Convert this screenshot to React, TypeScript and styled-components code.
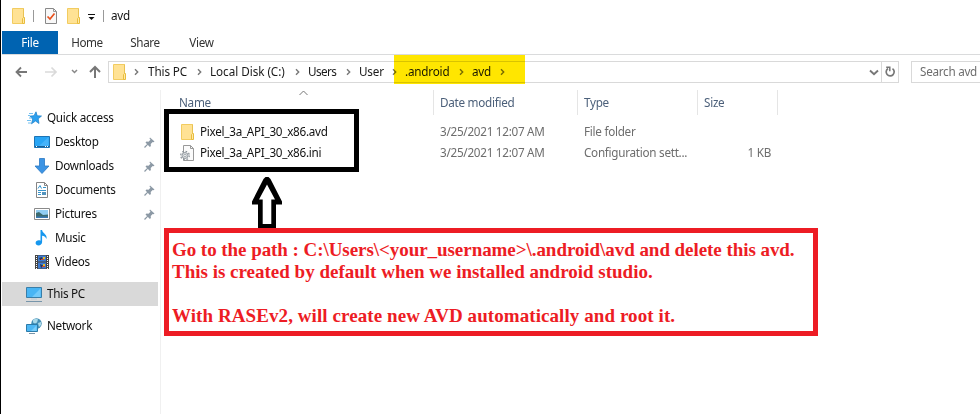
import React from 'react';
import styled, { createGlobalStyle } from 'styled-components';

const GlobalStyle = createGlobalStyle`
  * { box-sizing: border-box; }
  body { margin: 0; background: #fff; overflow: hidden; }
  svg { display: block; flex: none; }
`;

const Window = styled.div`
  position: relative;
  width: 980px;
  height: 414px;
  border-left: 1px solid #000;
  padding-left: 1px;
  overflow: hidden;
  background: #fff;
  color: #111;
  font: 11.7px/16px 'Noto Sans', 'Open Sans', sans-serif;
`;

const Text = styled.span<{ $ls?: number }>`
  display: block;
  padding-bottom: 2px;
  white-space: nowrap;
  letter-spacing: ${(p) => p.$ls ?? -0.27}px;
`;

const TitleBar = styled.header`
  display: flex;
  align-items: center;
  height: 31px;
  padding-left: 10px;
`;

const TitleRule = styled.i<{ $ml: number; $mr: number }>`
  width: 1px;
  height: 12px;
  margin: 0 ${(p) => p.$mr}px 0 ${(p) => p.$ml}px;
  background: #999;
`;

const TitleIcon = styled.span<{ $ml?: number; $mt?: number }>`
  margin-left: ${(p) => p.$ml ?? 0}px;
  margin-top: ${(p) => p.$mt ?? 0}px;
`;

const Ribbon = styled.nav`
  display: flex;
  height: 24px;
  border-bottom: 1px solid #dadbdc;
`;

const Tab = styled.div<{ $active?: boolean; $w: number }>`
  display: flex;
  align-items: center;
  justify-content: center;
  width: ${(p) => p.$w}px;
  height: 23px;
  padding-top: 1px;
  color: ${(p) => (p.$active ? '#fff' : '#333')};
  background: ${(p) => (p.$active ? '#0063b1' : 'transparent')};
`;

const AddressRow = styled.div`
  display: flex;
  height: 35px;
  padding-top: 6px;
`;

const NavButtons = styled.div`
  display: flex;
  width: 106px;
  height: 22px;
`;

const AddressBar = styled.div`
  display: flex;
  align-items: center;
  width: 791px;
  height: 22px;
  border: 1px solid #d9d9d9;
`;

const Crumb = styled.span<{ $w: number }>`
  display: flex;
  width: ${(p) => p.$w}px;
  color: #1a1a1a;
`;

const AddressTools = styled.div`
  display: flex;
  align-items: center;
  margin-left: auto;
  height: 20px;
`;

const Refresh = styled.div`
  display: flex;
  align-items: center;
  justify-content: center;
  width: 17px;
  height: 20px;
  margin-left: 2px;
  border-left: 1px solid #d9d9d9;
`;

const SearchBox = styled.div`
  display: flex;
  align-items: center;
  flex: 1;
  height: 22px;
  margin-left: 12px;
  padding-left: 8px;
  border: 1px solid #d9d9d9;
  border-right: 0;
  color: #6d6d6d;
`;

const Main = styled.div`
  display: flex;
  height: 324px;
`;

const Sidebar = styled.aside`
  width: 159px;
  padding-top: 16px;
  border-right: 1px solid #f0f0f0;
`;

const NavItem = styled.div<{ $indent: number; $gap?: number; $selected?: boolean }>`
  display: flex;
  align-items: center;
  width: 156px;
  height: 24px;
  margin-top: ${(p) => p.$gap ?? 0}px;
  padding: 0 3px 0 ${(p) => p.$indent}px;
  background: ${(p) => (p.$selected ? '#d9d9d9' : 'transparent')};
`;

const NavLabel = styled(Text)`
  flex: 1;
  margin-left: 5px;
`;

const Files = styled.section`
  flex: 1;
`;

const HeaderRow = styled.div`
  display: grid;
  grid-template-columns: 273px 144px 120px 80px;
  height: 25px;
  color: #4c607a;
`;

const HeaderCell = styled.div<{ $pad?: number }>`
  position: relative;
  padding: 4px 0 0 ${(p) => p.$pad ?? 6}px;
  border-right: 1px solid #e5e5e5;
`;

const SortMark = styled.svg`
  position: absolute;
  left: 138px;
  top: 0;
`;

const FileRow = styled.div`
  display: grid;
  grid-template-columns: 273px 144px 120px 73px;
  align-items: center;
  height: 21px;
  color: #6d6d6d;
`;

const FileList = styled.div`
  padding-top: 6px;
`;

const FileName = styled.div`
  display: flex;
  align-items: center;
  gap: 4px;
  padding-left: 19px;
  color: #111;
`;

const Cell = styled.div<{ $right?: boolean }>`
  padding-left: 6px;
  text-align: ${(p) => (p.$right ? 'right' : 'left')};
`;

const Highlight = styled.div`
  position: absolute;
  left: 393px;
  top: 55px;
  width: 131px;
  height: 29px;
  background: #ffe600;
  mix-blend-mode: multiply;
`;

const BlackFrame = styled.div`
  position: absolute;
  left: 163px;
  top: 109px;
  width: 195px;
  height: 63px;
  border: 5px solid #000;
`;

const ArrowMark = styled.svg`
  position: absolute;
  left: 250px;
  top: 176px;
`;

const Note = styled.div`
  position: absolute;
  left: 163px;
  top: 228px;
  width: 654px;
  height: 108px;
  padding: 6px 0 0 3px;
  border: 5px solid #ed1c24;
  background: #fff;
  color: #ed1c24;
  font: bold 19px/22px 'Liberation Serif', serif;
`;

const NoteLine = styled.div<{ $ls?: number }>`
  height: 22px;
  white-space: nowrap;
  letter-spacing: ${(p) => p.$ls ?? 0}px;
`;

const Folder = () => (
  <svg width="14" height="16" viewBox="0 0 14 16">
    <path d="M.5.5h11v15H.5z" fill="#ffe294" stroke="#f2cc60" />
    <path d="M10.500 15.500v-5l1-1h1v6z" fill="#ffe9a8" stroke="#e9bd3c" />
    <path d="M11.500.5v9" stroke="#e9c252" />
  </svg>
);

const CheckDoc = () => (
  <svg width="12" height="16" viewBox="0 0 12 16">
    <path d="M.5.5h8l3 3v12H.5z" fill="#f8f8f8" stroke="#888" />
    <path d="M8.500.5v3h3" fill="none" stroke="#999" />
    <path d="M2.500 8.500l2.500 2.500 4.500-5.500" fill="none" stroke="#e8501c" strokeWidth="1.700" />
  </svg>
);

const CustomizeMark = () => (
  <svg width="8" height="7" viewBox="0 0 8 7">
    <path d="M0 .5h7" stroke="#111" />
    <path d="M.5 3h6L3.500 6z" fill="#111" />
  </svg>
);

const NavArrows = () => (
  <svg width="106" height="22" viewBox="2 61 106 22" fill="none">
    <path d="M27 72H16.500M21 67.500L16.500 72l4.500 4.500" stroke="#777" strokeWidth="1.800" />
    <path d="M45 72h10.500M51.500 67.500L56 72l-4.500 4.500" stroke="#dadada" strokeWidth="1.700" />
    <path d="M72 70l2.500 2.500L77 70" stroke="#888" strokeWidth="1.500" />
    <path d="M95 78V67M90 72l5-5 5 5" stroke="#777" strokeWidth="2" />
  </svg>
);

const Chevron = () => (
  <svg width="5" height="8" viewBox="0 0 5 8">
    <path d="M1 1.300l2.700 2.700L1 6.700" fill="none" stroke="#777" strokeWidth="1.400" />
  </svg>
);

const DropMark = () => (
  <svg width="10" height="8" viewBox="0 0 10 8">
    <path d="M1 2.500l4 3.800 4-3.800" fill="none" stroke="#777" strokeWidth="1.900" />
  </svg>
);

const RefreshMark = () => (
  <svg width="11" height="12" viewBox="0 0 11 12" fill="none" stroke="#777">
    <path d="M7.500 2.600A4 4 0 1 1 3 2.500" strokeWidth="1.700" />
    <path d="M1.200 1.300h3.600v4" strokeWidth="1.500" />
  </svg>
);

const Pin = () => (
  <svg width="11" height="11" viewBox="0 0 11 11">
    <path d="M6 .5l4.500 4-1 .8-.8-.3-2 2 .2 2-1 1L1.500 5.500l1-1 2 .2 2-2L5.500 1.500z" fill="#8c99a5" />
    <path d="M3.800 7.200L.5 10.500" stroke="#8c99a5" strokeWidth="1.200" />
  </svg>
);

const Star = () => (
  <svg width="15" height="14" viewBox="0 0 15 14">
    <path d="M9 .8l1.200 4 4.300.2-3.300 2.800.8 4.700L8.500 10l-4 2.800L5.700 8 3 5.100l4-.4z" fill="#2ca0ef" stroke="#187dc7" strokeWidth=".7" />
    <path d="M2 2.500h4M1 4.500h2M2 7h3M0 9.500h4M1 12h3" stroke="#63b9ee" strokeWidth=".9" />
  </svg>
);

const DesktopIcon = () => (
  <svg width="16" height="12" viewBox="0 0 16 12">
    <path d="M.5.5h15v11H.5z" fill="#28a5f5" stroke="#1d74b5" />
    <path d="M14.500 1v9L5 10z" fill="#45b3fa" />
    <path d="M1 10.500h14" stroke="#185f96" />
    <path d="M2 10.500h1m8 0h1m1 0h1" stroke="#fff" />
  </svg>
);

const DownloadIcon = () => (
  <svg width="16" height="16" viewBox="0 0 16 16">
    <path d="M5.500.5h5v7.500h4.500L8 15.500 1 8h4.500z" fill="#3c94e4" stroke="#2a78c4" strokeWidth=".8" />
  </svg>
);

const DocumentIcon = () => (
  <svg width="16" height="16" viewBox="0 0 16 16">
    <path d="M2.500.5h8l3 3v12h-11z" fill="#fff" stroke="#858585" />
    <path d="M10.500.5v3h3" fill="none" stroke="#858585" />
    <path d="M4 6.500l2-3 1.500 3M4 8.500h8M4 10.500h3M4 12.500h3M9 5.500h3" fill="none" stroke="#3894cb" />
    <path d="M8 10h4v3H8z" fill="#5293bd" />
  </svg>
);

const PictureIcon = () => (
  <svg width="16" height="12" viewBox="0 0 16 12">
    <path d="M.5.5h15v11H.5z" fill="#fff" stroke="#8a8a8a" />
    <path d="M2 2h12v8H2z" fill="#91cdf2" />
    <path d="M2 5l3-1 4 3 5-.5V10H2z" fill="#3c6b70" />
    <path d="M2 8.500h12V10H2z" fill="#3979b4" />
  </svg>
);

const MusicIcon = () => (
  <svg width="16" height="16" viewBox="0 0 16 16">
    <path d="M6.500 0h1.600c.2 3.500 5.500 4 4.300 9-.6-2.200-2-3-4.300-3.300V12c0 4.300-6.500 4.500-6.500 1 0-2.300 2.700-3.300 4.900-2.300z" fill="#1697ee" />
  </svg>
);

const VideoIcon = () => (
  <svg width="16" height="16" viewBox="0 0 16 16">
    <path d="M1 1h14v14H1z" fill="#454545" />
    <path d="M4 1.500h8v6H4zM4 8.500h8v6H4z" fill="#3e7bd1" />
    <path d="M5 4l3-1 1 3H6zM6 10l4 2-3 2z" fill="#283454" />
    <path d="M9 3h2v2H9zM9 10h2v2H9z" fill="#e5bb27" />
    <path d="M7 5h3v1H7zM8 12h3v1H8z" fill="#c74637" />
    <path d="M2.500 2v13M13.500 2v13" stroke="#fff" strokeDasharray="1 1" />
  </svg>
);

const ComputerIcon = () => (
  <svg width="16" height="15" viewBox="0 0 16 15">
    <path d="M.5.5h15v10H.5z" fill="#48b5f4" stroke="#397ea8" />
    <path d="M14.500 1.500v8.500H6z" fill="#72cafa" />
    <path d="M5 12h6" stroke="#b8cbd7" />
    <path d="M0 14.500h16" stroke="#7795aa" />
  </svg>
);

const NetworkIcon = () => (
  <svg width="16" height="16" viewBox="0 0 16 16">
    <circle cx="10.500" cy="5.500" r="5.200" fill="#438eb5" />
    <path d="M7 2q3-2 5-.5l-1 3-2 1-2-1zM12 5l3-1v3l-2 2z" fill="#a9d9e9" />
    <path d="M.5 6.500h11v7H.5z" fill="#4db7f4" stroke="#2c7ba9" />
    <path d="M10.500 7.500V13H5z" fill="#79cdfa" />
    <path d="M3 15.500h6" stroke="#7795aa" />
  </svg>
);

const IniIcon = () => (
  <svg width="15" height="16" viewBox="0 0 15 16">
    <path d="M3.500.5h7l3 3v12h-10z" fill="#fbfbfb" stroke="#999" />
    <path d="M10.500.5v3h3" fill="none" stroke="#999" />
    <circle cx="5" cy="10.500" r="4.300" fill="none" stroke="#8a9299" strokeWidth="1.200" strokeDasharray="1.700 1.677" />
    <circle cx="5" cy="10.500" r="3" fill="#dde0e2" stroke="#8a9299" strokeWidth=".9" />
    <circle cx="5" cy="10.500" r="1.200" fill="#fff" stroke="#8a9299" strokeWidth=".7" />
  </svg>
);

const IconSlot = styled.span<{ $shift?: boolean }>`
  display: flex;
  justify-content: center;
  width: 16px;
  flex: none;
  padding-right: ${(p) => (p.$shift ? 2 : 0)}px;
`;

const crumbs = [
  { label: 'This PC', ls: -0.1, w: 49 },
  { label: 'Local Disk (C:)', ls: -0.04, w: 85 },
  { label: 'Users', ls: -0.6, w: 38 },
  { label: 'User', ls: -0.2, w: 33 },
  { label: '.android', ls: -0.2, w: 54 },
  { label: 'avd', ls: -0.2, w: 28 },
];

const places = [
  { label: 'Quick access', icon: <Star />, indent: 24 },
  { label: 'Desktop', icon: <DesktopIcon />, indent: 32, pin: true },
  { label: 'Downloads', icon: <DownloadIcon />, indent: 32, pin: true },
  { label: 'Documents', icon: <DocumentIcon />, indent: 32, pin: true },
  { label: 'Pictures', icon: <PictureIcon />, indent: 32, pin: true },
  { label: 'Music', icon: <MusicIcon />, indent: 32 },
  { label: 'Videos', icon: <VideoIcon />, indent: 32 },
  { label: 'This PC', icon: <ComputerIcon />, indent: 24, gap: 8, selected: true },
  { label: 'Network', icon: <NetworkIcon />, indent: 24, gap: 8 },
];

const CrumbGroup = styled.div`
  display: flex;
  align-items: center;
`;

const ChevronSlot = styled.span`
  width: 13px;
`;

const FirstChevron = styled.span`
  width: 14px;
  margin-left: 7px;
`;

export default function App() {
  return (
    <>
      <GlobalStyle />
      <Window>
        <TitleBar>
          <Folder />
          <TitleRule $ml={7} $mr={11} />
          <CheckDoc />
          <TitleIcon $ml={10}><Folder /></TitleIcon>
          <TitleIcon $ml={7} $mt={3}><CustomizeMark /></TitleIcon>
          <TitleRule $ml={7} $mr={7} />
          <Text>avd</Text>
        </TitleBar>
        <Ribbon>
          <Tab $active $w={56}><Text>File</Text></Tab>
          <Tab $w={58}><Text $ls={-0.5}>Home</Text></Tab>
          <Tab $w={58}><Text $ls={-0.4}>Share</Text></Tab>
          <Tab $w={55}><Text>View</Text></Tab>
        </Ribbon>
        <AddressRow>
          <NavButtons><NavArrows /></NavButtons>
          <AddressBar>
            <TitleIcon $ml={4}><Folder /></TitleIcon>
            <FirstChevron><Chevron /></FirstChevron>
            {crumbs.map((c) => (
              <CrumbGroup key={c.label}>
                <Crumb $w={c.w}><Text $ls={c.ls}>{c.label}</Text></Crumb>
                <ChevronSlot><Chevron /></ChevronSlot>
              </CrumbGroup>
            ))}
            <AddressTools>
              <DropMark />
              <Refresh><RefreshMark /></Refresh>
            </AddressTools>
          </AddressBar>
          <SearchBox><Text>Search avd</Text></SearchBox>
        </AddressRow>
        <Main>
          <Sidebar>
            {places.map((p) => (
              <NavItem key={p.label} $indent={p.indent} $gap={p.gap} $selected={p.selected}>
                <IconSlot>{p.icon}</IconSlot>
                <NavLabel>{p.label}</NavLabel>
                {p.pin && <Pin />}
              </NavItem>
            ))}
          </Sidebar>
          <Files>
            <HeaderRow>
              <HeaderCell $pad={18}>
                <Text>Name</Text>
                <SortMark width="9" height="6" viewBox="0 0 9 6">
                  <path d="M.5 5l4-4 4 4" fill="none" stroke="#777" />
                </SortMark>
              </HeaderCell>
              <HeaderCell><Text>Date modified</Text></HeaderCell>
              <HeaderCell><Text>Type</Text></HeaderCell>
              <HeaderCell><Text>Size</Text></HeaderCell>
            </HeaderRow>
            <FileList>
              <FileRow>
                <FileName><IconSlot><Folder /></IconSlot><Text>Pixel_3a_API_30_x86.avd</Text></FileName>
                <Cell><Text>3/25/2021 12:07 AM</Text></Cell>
                <Cell><Text>File folder</Text></Cell>
                <Cell />
              </FileRow>
              <FileRow>
                <FileName><IconSlot $shift><IniIcon /></IconSlot><Text>Pixel_3a_API_30_x86.ini</Text></FileName>
                <Cell><Text>3/25/2021 12:07 AM</Text></Cell>
                <Cell><Text>Configuration sett...</Text></Cell>
                <Cell $right><Text>1 KB</Text></Cell>
              </FileRow>
            </FileList>
          </Files>
        </Main>
        <Highlight />
        <BlackFrame />
        <ArrowMark width="34" height="53" viewBox="251 176 34 53">
          <path d="M265.500 177h3l2 2 11.500 22.500v3h-6V228h-18v-23.500h-6v-3L263.500 179z" fill="#000" />
          <path d="M267 184.500l8 15h-3.700V224h-8.600v-24.500H259z" fill="#fff" />
        </ArrowMark>
        <Note>
          <NoteLine $ls={-0.055}>Go to the path : C:\Users\&lt;your_username&gt;\.android\avd and delete this avd.</NoteLine>
          <NoteLine>This is created by default when we installed android studio.</NoteLine>
          <NoteLine />
          <NoteLine $ls={0.08}>With RASEv2, will create new AVD automatically and root it.</NoteLine>
        </Note>
      </Window>
    </>
  );
}
